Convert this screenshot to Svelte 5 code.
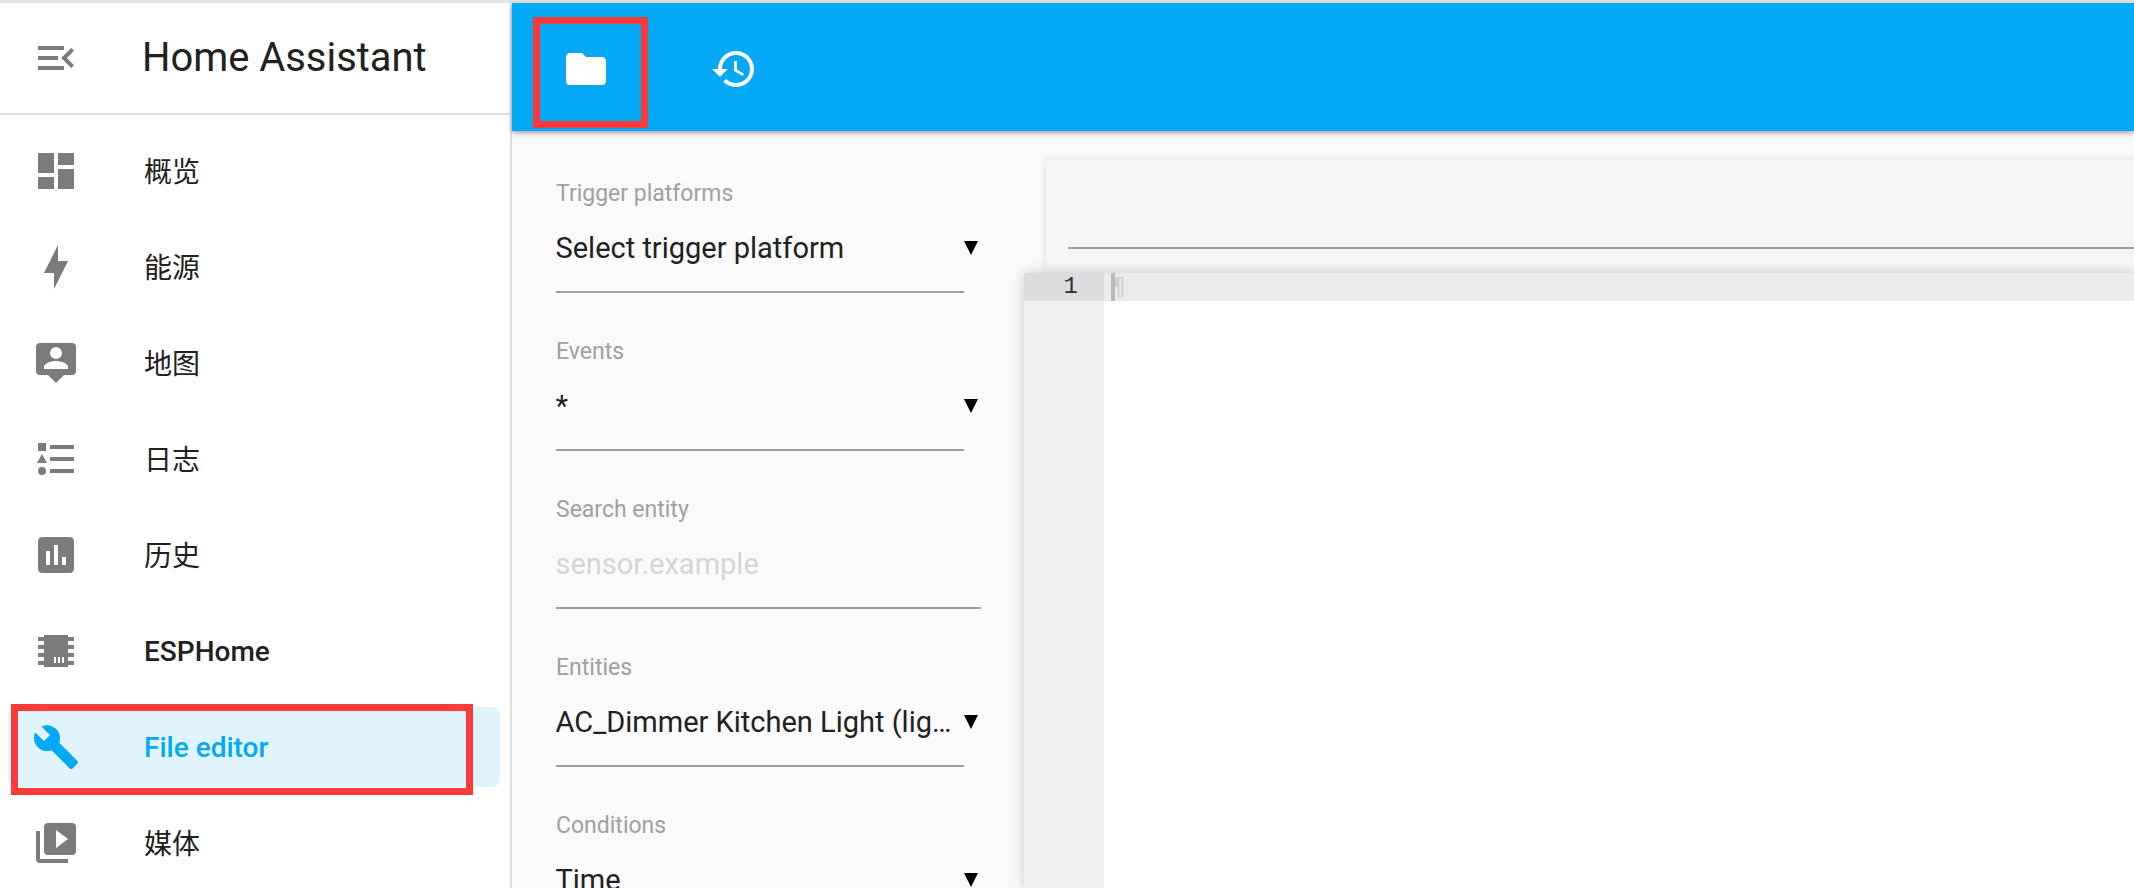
<script>
  const nav = [
    { label: '概览', d: 'M13,3V9H21V3M13,21H21V11H13M3,21H11V15H3M3,13H11V3H3V13Z' },
    { label: '能源', d: 'M11 15H6L13 1V9H18L11 23V15Z' },
    { label: '地图', d: 'M20,2H4A2,2 0 0,0 2,4V16A2,2 0 0,0 4,18H8L12,22L16,18H20A2,2 0 0,0 22,16V4A2,2 0 0,0 20,2M12,4A3,3 0 0,1 15,7A3,3 0 0,1 12,10A3,3 0 0,1 9,7A3,3 0 0,1 12,4M18,15H6V14C6,12 10,11 12,11C14,11 18,12 18,14V15Z' },
    { label: '日志', d: 'M5,9.5L7.5,14H2.5L5,9.5M3,4H7V8H3V4M5,20A2,2 0 0,0 7,18A2,2 0 0,0 5,16A2,2 0 0,0 3,18A2,2 0 0,0 5,20M9,5V7H21V5H9M9,19H21V17H9V19M9,13H21V11H9V13Z' },
    { label: '历史', d: 'M19 3H5C3.9 3 3 3.9 3 5V19C3 20.1 3.9 21 5 21H19C20.1 21 21 20.1 21 19V5C21 3.9 20.1 3 19 3M9 17H7V10H9V17M13 17H11V7H13V17M17 17H15V13H17V17Z' },
    { label: 'ESPHome', strong: true, d: 'M6,4H18V5H21V7H18V9H21V11H18V13H21V15H18V17H21V19H18V20H6V19H3V17H6V15H3V13H6V11H3V9H6V7H3V5H6V4M11,15V18H12V15H11M13,15V18H14V15H13M15,15V18H16V15H15Z' },
    { label: 'File editor', strong: true, active: true, d: 'M22.7,19L13.6,9.9C14.5,7.6 14,4.9 12.1,3C10.1,1 7.1,0.6 4.7,1.7L9,6L6,9L1.6,4.7C0.4,7.1 0.9,10.1 2.9,12.1C4.8,14 7.5,14.5 9.8,13.6L18.9,22.7C19.3,23.1 19.9,23.1 20.3,22.7L22.6,20.4C23.1,20 23.1,19.3 22.7,19Z' },
    { label: '媒体', d: 'M4,6H2V20A2,2 0 0,0 4,22H18V20H4V6M20,2H8A2,2 0 0,0 6,4V16A2,2 0 0,0 8,18H20A2,2 0 0,0 22,16V4A2,2 0 0,0 20,2M12,14.5V5.5L18,10L12,14.5Z' }
  ];

  const fields = [
    { label: 'Trigger platforms', value: 'Select trigger platform' },
    { label: 'Events', value: '*' },
    { label: 'Search entity', placeholder: 'sensor.example' },
    { label: 'Entities', value: 'AC_Dimmer Kitchen Light (light.ac_dimmer_kitchen_light)' },
    { label: 'Conditions', value: 'Time' }
  ];
</script>

<div class="page">
  <aside class="sidebar">
    <div class="brand">
      <svg class="icon" viewBox="0 0 24 24"><path d="M21,15.61L19.59,17L14.58,12L19.59,7L21,8.39L17.44,12L21,15.61M3,6H16V8H3V6M3,13V11H13V13H3M3,18V16H16V18H3Z" /></svg>
      <span class="title">Home Assistant</span>
    </div>
    <nav>
      {#each nav as item}
        <div class="item" class:active={item.active} class:strong={item.strong}>
          <svg class="icon" viewBox="0 0 24 24"><path fill-rule="evenodd" d={item.d} /></svg>
          <span>{item.label}</span>
        </div>
      {/each}
    </nav>
  </aside>

  <main>
    <header>
      <div class="tool">
        <svg class="icon" viewBox="0 0 24 24"><path d="M10,4H4C2.89,4 2,4.89 2,6V18A2,2 0 0,0 4,20H20A2,2 0 0,0 22,18V8C22,6.89 21.1,6 20,6H12L10,4Z" /></svg>
      </div>
      <div class="tool">
        <svg class="icon" viewBox="0 0 24 24"><path d="M13 3c-4.97 0-9 4.03-9 9H1l3.89 3.89.07.14L9 12H6c0-3.87 3.13-7 7-7s7 3.13 7 7-3.13 7-7 7c-1.93 0-3.68-.79-4.94-2.06l-1.42 1.42C8.27 19.99 10.51 21 13 21c4.97 0 9-4.03 9-9s-4.03-9-9-9zm-1 5v5l4.28 2.54.72-1.21-3.5-2.08V8H12z" /></svg>
      </div>
    </header>

    <div class="content">
      <section class="panel">
        {#each fields as field}
          <div class="field">
            <div class="label">{field.label}</div>
            {#if field.placeholder}
              <div class="control search"><span class="placeholder">{field.placeholder}</span></div>
            {:else}
              <div class="control">
                <span class="value">{field.value}</span>
                <svg class="caret" viewBox="0 0 14 14"><polygon points="0,0 14,0 7,14" /></svg>
              </div>
            {/if}
          </div>
        {/each}
      </section>

      <section class="workspace">
        <div class="card"><div class="rule"></div></div>
        <div class="editor">
          <div class="gutter"><div class="gutter-cell">1</div></div>
          <div class="lines">
            <div class="line">
              <span class="invisible">¶</span>
              <span class="cursor"></span>
            </div>
          </div>
        </div>
      </section>
    </div>
  </main>

  <div class="mark mark-tool"></div>
  <div class="mark mark-nav"></div>
</div>

<style>
  :global(body) {
    margin: 0;
    overflow: hidden;
    background: #fff;
  }

  .page {
    position: relative;
    display: flex;
    width: 2134px;
    height: 888px;
    box-sizing: border-box;
    padding-top: 3px;
    overflow: hidden;
    background: #e2e2e2;
    color: #212121;
    font-family: Roboto, "Noto Sans CJK SC", sans-serif;
  }

  .icon {
    flex: none;
    width: 48px;
    height: 48px;
    fill: currentColor;
  }

  /* sidebar */
  .sidebar {
    flex: none;
    width: 512px;
    box-sizing: border-box;
    border-right: 2px solid #e0e0e0;
    background: #fff;
  }

  .brand {
    display: flex;
    align-items: center;
    gap: 62px;
    height: 109px;
    padding: 0 0 1px 32px;
    border-bottom: 2px solid #e0e0e0;
    color: #7b7b7b;
  }

  .title {
    color: #212121;
    font-size: 39.9px;
  }

  nav {
    padding-top: 8px;
  }

  .item {
    display: flex;
    align-items: center;
    gap: 64px;
    height: 80px;
    margin: 8px 10px 16px 8px;
    padding-left: 24px;
    border-radius: 8px;
    color: #7b7b7b;
    font-size: 28px;
  }

  .item span {
    padding-bottom: 3px;
    color: #212121;
  }

  .item.strong span {
    padding-bottom: 0;
    font-weight: 500;
  }

  .item.active {
    background: #e0f4fe;
    color: #03a9f4;
  }

  .item.active span {
    color: #03a9f4;
  }

  /* main */
  main {
    flex: 1;
    display: flex;
    flex-direction: column;
    min-width: 0;
  }

  header {
    position: relative;
    z-index: 3;
    flex: none;
    display: flex;
    gap: 52px;
    height: 128px;
    padding-left: 26px;
    background: #03a9f4;
    box-shadow: 0 2px 5px rgba(0, 0, 0, 0.35);
    color: #fff;
  }

  .tool {
    display: flex;
    align-items: center;
    justify-content: center;
    width: 96px;
    height: 132px;
  }

  .content {
    flex: 1;
    display: flex;
    min-height: 0;
    background: #fafafa;
  }

  .panel {
    flex: none;
    width: 512px;
    box-sizing: border-box;
    padding: 4px 0 0 44px;
  }

  .field {
    height: 158px;
    box-sizing: border-box;
    padding-top: 45px;
  }

  .label {
    color: #a0a0a0;
    font-size: 23px;
    line-height: 28px;
  }

  .control {
    position: relative;
    width: 408px;
    height: 40px;
    margin-top: 20px;
    padding-bottom: 23px;
    border-bottom: 2px solid #9e9e9e;
    font-size: 29px;
    line-height: 40px;
    text-indent: -0.5px;
  }

  .control.search {
    width: 425px;
  }

  .value {
    display: block;
    width: 398px;
    overflow: hidden;
    white-space: nowrap;
    text-overflow: ellipsis;
  }

  .placeholder {
    color: #d4d4d4;
  }

  .caret {
    position: absolute;
    left: 100%;
    top: 13px;
    width: 14px;
    height: 14px;
    fill: #000;
  }

  /* editor side */
  .workspace {
    flex: 1;
    display: flex;
    flex-direction: column;
    min-width: 0;
    padding-top: 29px;
  }

  .card {
    flex: none;
    height: 113px;
    box-sizing: border-box;
    margin-left: 22px;
    padding: 87px 0 0 22px;
    background: #f5f5f5;
    box-shadow: 0 0 8px rgba(0, 0, 0, 0.12);
  }

  .rule {
    height: 2px;
    background: #9e9e9e;
  }

  .editor {
    position: relative;
    flex: 1;
    display: flex;
    background: #fff;
    box-shadow: 0 0 12px rgba(0, 0, 0, 0.2);
    font-family: "Liberation Mono", monospace;
    font-size: 24px;
    line-height: 28px;
  }

  .gutter {
    flex: none;
    width: 80px;
    background: #f0f0f0;
    color: #333;
  }

  .gutter-cell {
    height: 28px;
    padding-right: 26px;
    background: #dcdcdc;
    text-align: right;
  }

  .lines {
    flex: 1;
  }

  .line {
    position: relative;
    height: 28px;
    padding-left: 7px;
    background: #ebebeb;
  }

  .invisible {
    color: #cfcfcf;
    font-family: "DejaVu Sans Mono", monospace;
  }

  .cursor {
    position: absolute;
    left: 7px;
    top: 0;
    width: 4px;
    height: 28px;
    background: #b9b9b9;
  }

  /* red annotation boxes on top of the screenshot */
  .mark {
    position: absolute;
    z-index: 5;
    box-sizing: border-box;
    border: 7px solid #fb3a3a;
  }

  .mark-tool {
    left: 533px;
    top: 17px;
    width: 115px;
    height: 111px;
  }

  .mark-nav {
    left: 11px;
    top: 704px;
    width: 462px;
    height: 91px;
  }
</style>
